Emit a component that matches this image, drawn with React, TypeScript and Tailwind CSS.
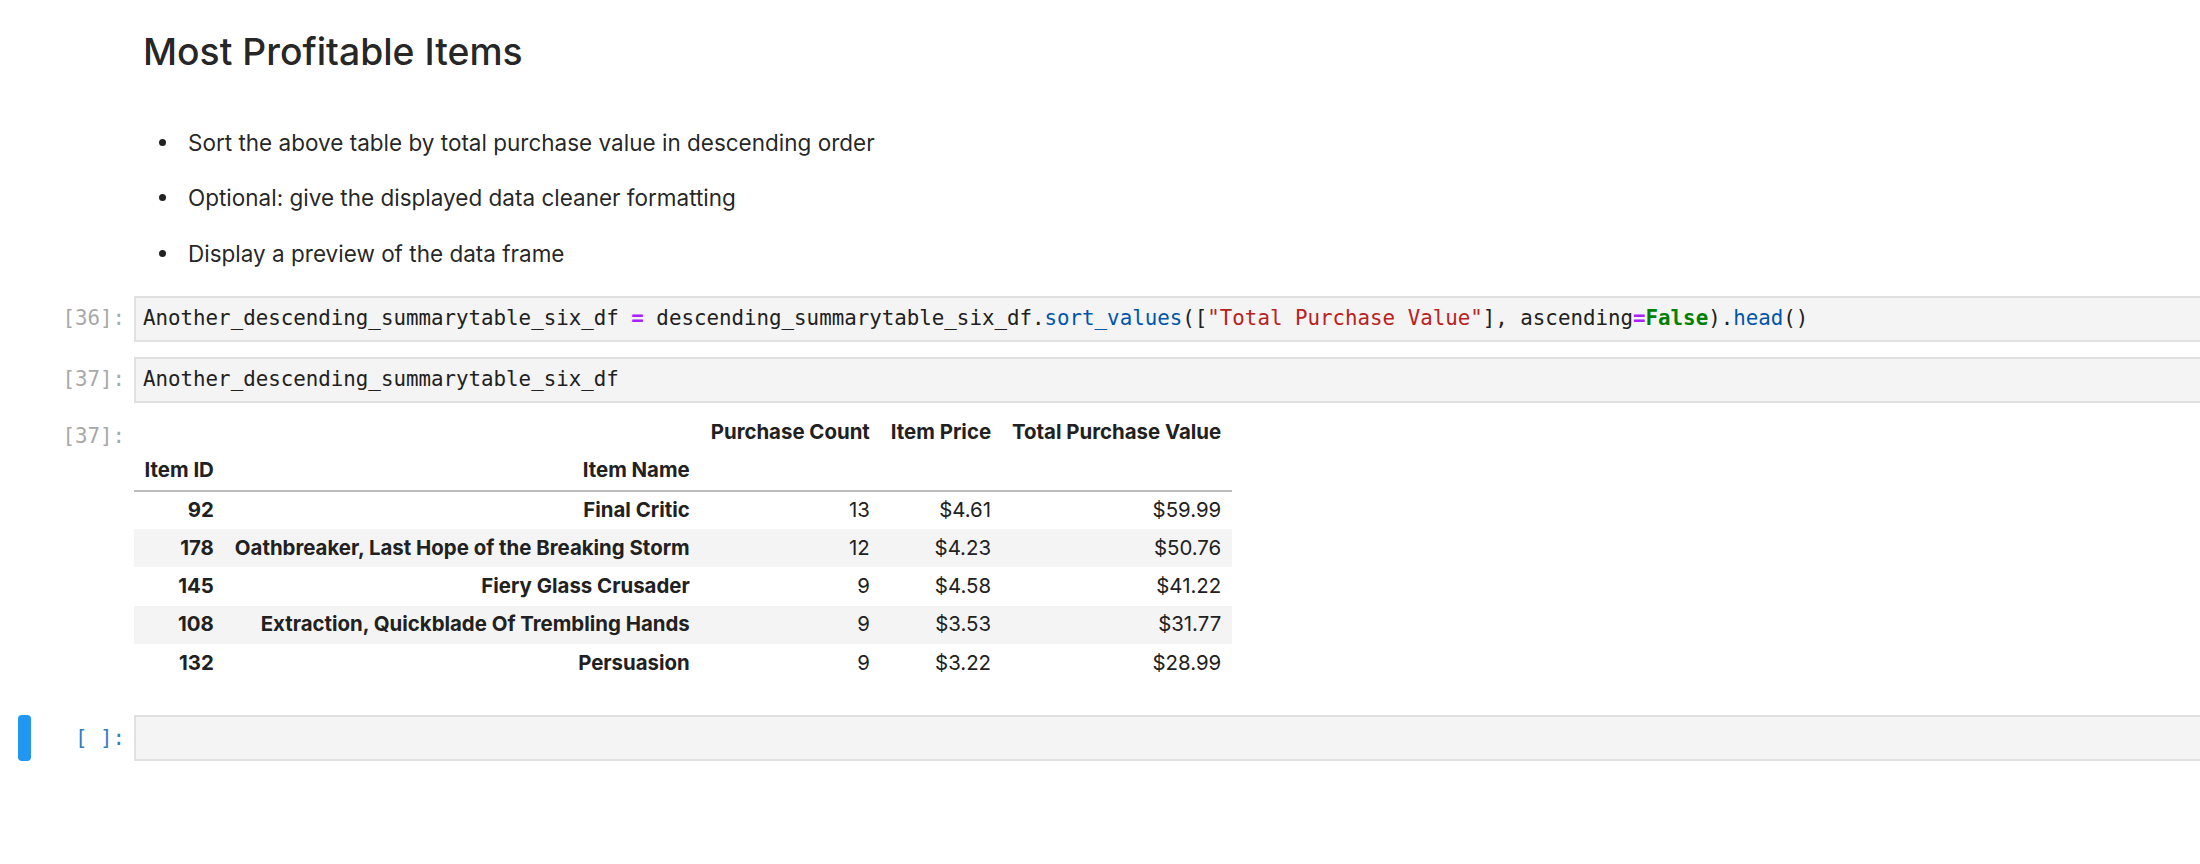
import React from "react";

type Row = {
    id: number,
    name: string,
    count: number,
    price: string,
    total: string,
}

const rows: Row[] = [
    { id: 92, name: "Final Critic", count: 13, price: "$4.61", total: "$59.99" },
    { id: 178, name: "Oathbreaker, Last Hope of the Breaking Storm", count: 12, price: "$4.23", total: "$50.76" },
    { id: 145, name: "Fiery Glass Crusader", count: 9, price: "$4.58", total: "$41.22" },
    { id: 108, name: "Extraction, Quickblade Of Trembling Hands", count: 9, price: "$3.53", total: "$31.77" },
    { id: 132, name: "Persuasion", count: 9, price: "$3.22", total: "$28.99" },
];

const mono = "font-['DejaVu_Sans_Mono','Liberation_Mono',monospace]";
const sans = "font-['Inter','Noto_Sans',sans-serif]";

function Prompt({ text, active }: { text: string, active?: boolean }) {
    return (
        <div className={`${mono} text-[20.8px] leading-[27px] ${active ? "text-[#307fc1]" : "text-[#a8a8a8]"} text-right w-full pr-[9px]`}>
            {text}
        </div>
    );
}

function CodeCell({ prompt, children, active }: { prompt: string, children?: React.ReactNode, active?: boolean }) {
    return (
        <div className="flex flex-row items-stretch h-[46px]">
            <div className="w-[134px] shrink-0 flex flex-row items-center relative">
                {active && <div className="absolute left-[18px] top-0 bottom-0 w-[13px] rounded-[4px] bg-[#2196f3]" />}
                <Prompt text={prompt} active={active} />
            </div>
            <div className={`flex-1 flex items-center bg-[#f4f4f4] border-y-2 border-l-2 border-[#e0e0e0] pl-[7px] ${mono} text-[20.8px] leading-[27px] text-[#212121] whitespace-pre`}>
                {children}
            </div>
        </div>
    );
}

function App() {
    return (
        <div className="min-h-screen w-full bg-white overflow-hidden">
            {/* markdown cell */}
            <div className="flex flex-row pt-[30px]">
                <div className="w-[134px] shrink-0" />
                <div className={`${sans} text-[rgba(0,0,0,0.87)] pl-[9px]`}>
                    <h2 className="text-[37.3px] leading-[1.2] font-medium">Most Profitable Items</h2>
                    <ul className="mt-[51px] flex flex-col gap-[22.5px]">
                        {[
                            "Sort the above table by total purchase value in descending order",
                            "Optional: give the displayed data cleaner formatting",
                            "Display a preview of the data frame",
                        ].map((t) => (
                            <li key={t} className="flex flex-row items-center text-[22.5px] leading-[33px]">
                                <span className="w-[7px] h-[7px] rounded-full bg-[#222] ml-[16px] mr-[22px]" />
                                {t}
                            </li>
                        ))}
                    </ul>
                </div>
            </div>

            <div className="mt-[26px] flex flex-col gap-[15px]">
                <CodeCell prompt="[36]:">
                    Another_descending_summarytable_six_df <span className="text-[#aa22ff] font-bold">=</span> descending_summarytable_six_df.<span className="text-[#0055aa]">sort_values</span>([<span className="text-[#ba2121]">"Total Purchase Value"</span>], ascending<span className="text-[#aa22ff] font-bold">=</span><span className="text-[#008000] font-bold">False</span>).<span className="text-[#0055aa]">head</span>()
                </CodeCell>
                <CodeCell prompt="[37]:">
                    Another_descending_summarytable_six_df
                </CodeCell>
            </div>

            {/* output */}
            <div className="flex flex-row mt-[10px]">
                <div className="w-[134px] shrink-0 pt-[10px]">
                    <Prompt text="[37]:" />
                </div>
                <table className={`${sans} text-[20.4px] text-[#212121] border-collapse`}>
                    <thead className="border-b-2 border-[#bdbdbd]">
                        <tr className="h-[39px]">
                            <th className="px-[10.5px]" />
                            <th className="px-[10.5px]" />
                            <th className="px-[10.5px] text-right font-bold">Purchase Count</th>
                            <th className="px-[10.5px] text-right font-bold">Item Price</th>
                            <th className="px-[10.5px] text-right font-bold">Total Purchase Value</th>
                        </tr>
                        <tr className="h-[39px]">
                            <th className="px-[10.5px] text-left font-bold">Item ID</th>
                            <th className="px-[10.5px] text-right font-bold">Item Name</th>
                            <th className="px-[10.5px]" />
                            <th className="px-[10.5px]" />
                            <th className="px-[10.5px]" />
                        </tr>
                    </thead>
                    <tbody>
                        {rows.map((r, i) => (
                            <tr key={r.id} className={`h-[38.3px] ${i % 2 === 1 ? "bg-[#f4f4f4]" : "bg-white"}`}>
                                <th className="px-[10.5px] text-right font-bold">{r.id}</th>
                                <th className="px-[10.5px] text-right font-bold whitespace-nowrap">{r.name}</th>
                                <td className="px-[10.5px] text-right">{r.count}</td>
                                <td className="px-[10.5px] text-right">{r.price}</td>
                                <td className="px-[10.5px] text-right">{r.total}</td>
                            </tr>
                        ))}
                    </tbody>
                </table>
            </div>

            <div className="mt-[33px]">
                <CodeCell prompt="[ ]:" active />
            </div>
        </div>
    );
}

export default App;
